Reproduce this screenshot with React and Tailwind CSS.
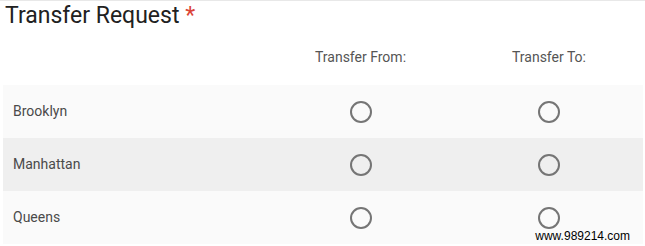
import React from 'react';

const ROWS = [
  { name: 'Brooklyn', bg: 'bg-[#fafafa]' },
  { name: 'Manhattan', bg: 'bg-[#efefef]' },
  { name: 'Queens', bg: 'bg-[#fafafa]' },
];

function Radio() {
  return (
    <span className="block w-[22px] h-[22px] rounded-full border-2 border-[#757575] bg-transparent" />
  );
}

export default function App() {
  return (
    <div className="relative w-[645px] h-[246px] bg-white overflow-hidden border-t border-[#e8e8e8] font-['Roboto',sans-serif]">
      {/* Title */}
      <div className="pl-[5px] h-[30px] text-[23px] leading-[29px] text-[#212121]">
        Transfer Request <span className="text-[#db4437]">*</span>
      </div>

      {/* Grid */}
      <div className="pl-[3px] pr-[2px]">
        <div className="grid grid-cols-[263px_189px_188px] h-[54px] items-center text-[14px] text-[#555]">
          <div />
          <div className="text-center pb-[2px]">Transfer From:</div>
          <div className="text-center pb-[2px]">Transfer To:</div>
        </div>

        {ROWS.map(r => (
          <div
            key={r.name}
            className={`grid grid-cols-[263px_189px_188px] h-[53px] items-center ${r.bg}`}
          >
            <div className="pl-[10px] text-[14px] text-[#4a4a4a]">{r.name}</div>
            <div className="flex justify-center"><Radio /></div>
            <div className="flex justify-center"><Radio /></div>
          </div>
        ))}
      </div>

      {/* Watermark */}
      <div className="absolute right-[15px] bottom-[4px] text-[12px] leading-[12px] text-black font-['Liberation_Sans',sans-serif]">
        www.989214.com
      </div>
    </div>
  );
}
